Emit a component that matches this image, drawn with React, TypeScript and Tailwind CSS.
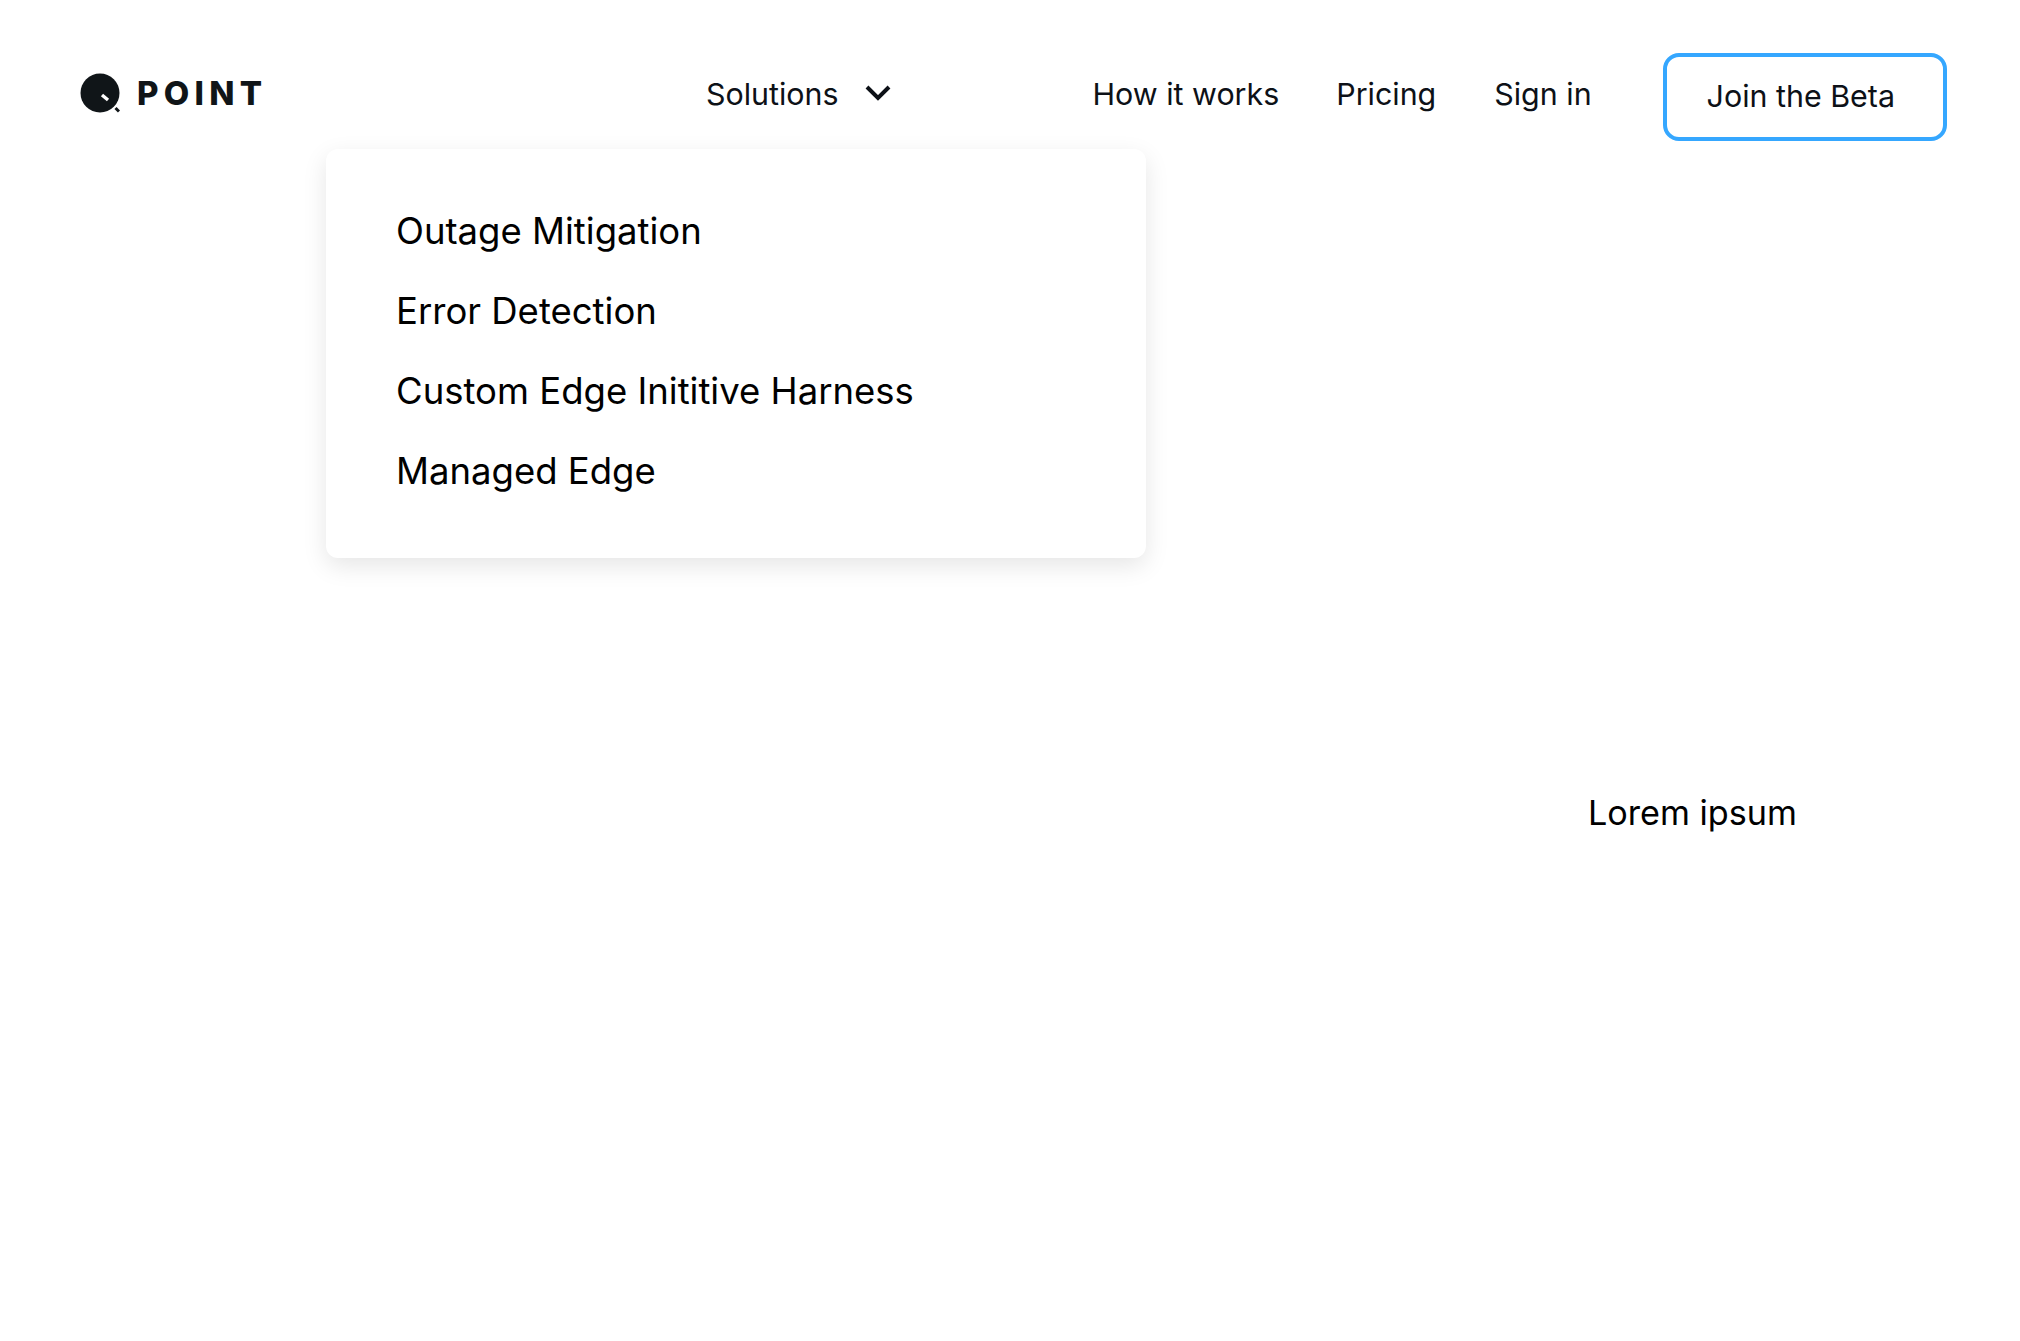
export default function App() {
  const items = ["Outage Mitigation", "Error Detection", "Custom Edge Inititive Harness", "Managed Edge"];
  return (
    <div className="min-h-[1341px] bg-white font-['Inter',sans-serif] text-black relative overflow-hidden">
      <header className="relative flex items-start pl-[80px] h-[149px]">
        <a className="flex items-center mt-[73px] h-[42px]">
          <svg width="40" height="42" viewBox="0 0 40 42" className="block">
            <circle cx="20" cy="20" r="19.5" fill="#101518" />
            <path d="M22 22 L28 27" stroke="#fff" strokeWidth="3.4" />
            <path d="M35.5 35 L39 38.5" stroke="#101518" strokeWidth="3" />
          </svg>
          <span className="ml-[17px] text-[33px] leading-[40px] font-extrabold tracking-[0.16em] text-[#101518] -mt-[2px]">POINT</span>
        </a>
        <nav className="flex items-start mt-[75px] text-[30.4px] leading-[38px] text-[#0d1117] ml-[438.5px]">
          <button className="flex items-center">
            Solutions
            <svg width="26" height="16" viewBox="0 0 26 16" className="ml-[26px] -mt-[2px]" fill="none">
              <path d="M2 2 L13 13 L24 2" stroke="#0d1117" strokeWidth="4" />
            </svg>
          </button>
          <a className="ml-[202px]">How it works</a>
          <a className="ml-[57px]">Pricing</a>
          <a className="ml-[58px]">Sign in</a>
        </nav>
        <button className="ml-[71px] mt-[53px] w-[284px] h-[88px] rounded-[16px] border-[4px] border-[#35a7ff] text-[30.4px] text-[#0d1117] text-left pl-[40px]">
          Join the Beta
        </button>
        <div className="absolute left-[326px] top-[149px] w-[820px] h-[409px] bg-white rounded-[12px] shadow-[0_8px_24px_rgba(0,0,0,0.10)] pl-[70px] pt-[42px] text-[36.5px] leading-[80px] text-black">
          {items.map((t) => (
            <div key={t}>{t}</div>
          ))}
        </div>
      </header>
      <main className="flex justify-end pr-[223px] pt-[642px]">
        <p className="text-[34.2px] leading-[44px] text-black">Lorem ipsum</p>
      </main>
    </div>
  );
}
